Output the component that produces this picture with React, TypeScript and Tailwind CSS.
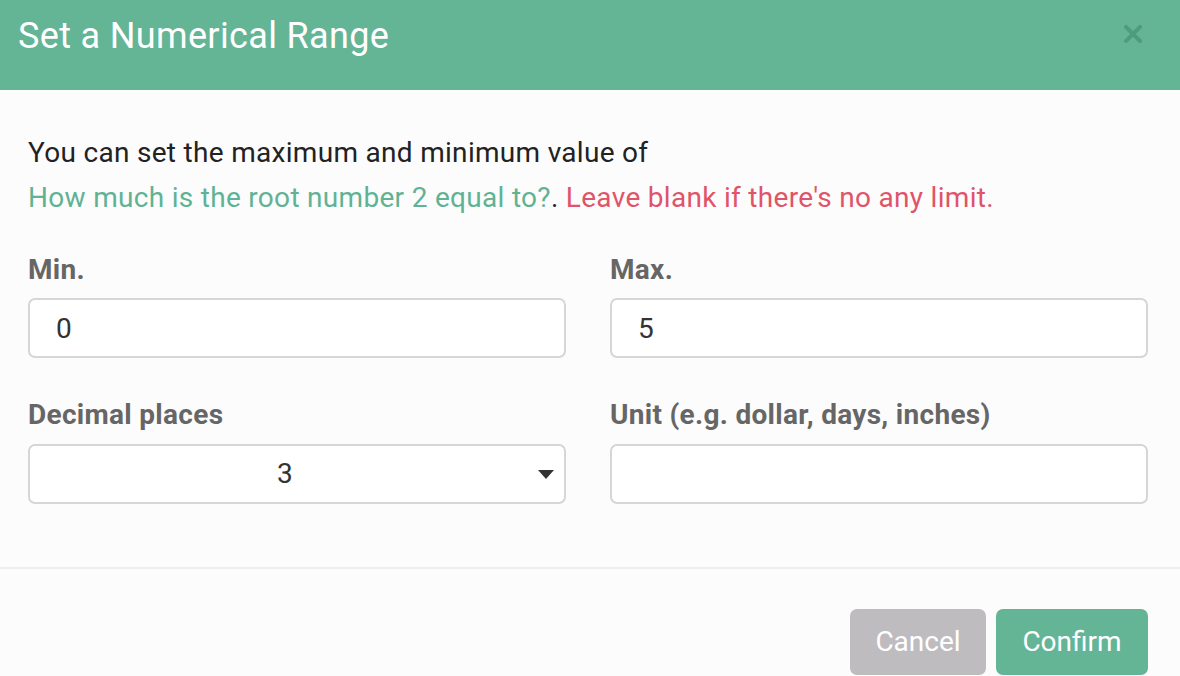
import { useState } from "react";

export default function App() {
  const [min, setMin] = useState("0");
  const [max, setMax] = useState("5");
  const [unit, setUnit] = useState("");
  const [decimals, setDecimals] = useState("3");

  return (
    <div className="w-[1180px] h-[676px] overflow-hidden bg-[#fdfcfd] font-['Roboto',sans-serif] tracking-[0.3px]">
      {/* Header */}
      <div className="h-[90px] bg-[#63b596] pl-[18px] pr-[38px] pt-[19px] flex items-start justify-between">
        <h1 className="text-[36px] leading-[35px] tracking-[0.35px] text-white">Set a Numerical Range</h1>
        <button type="button" className="mt-[6px] text-[#4e9c7d]">
          <svg width="18" height="18" viewBox="0 0 18 18">
            <path d="M2 2L16 16M16 2L2 16" stroke="currentColor" strokeWidth="4" strokeLinecap="square" />
          </svg>
        </button>
      </div>

      {/* Body */}
      <div className="pl-[28px] pr-[32px] pt-[42px]">
        <p className="text-[28px] leading-[42px] text-[#222222]">
          You can set the maximum and minimum value of
        </p>
        <p className="mt-[3px] text-[28px] leading-[42px]">
          <span className="text-[#5fb394]">How much is the root number 2 equal to?</span>
          <span className="text-[#222222]">.</span>{" "}
          <span className="text-[#e0546a]">Leave blank if there's no any limit.</span>
        </p>

        <div className="grid grid-cols-2 gap-x-[44px] mt-[30px]">
          <div>
            <label className="block text-[28px] leading-[42px] font-bold text-[#666666]">Min.</label>
            <input
              value={min}
              onChange={(e) => setMin(e.target.value)}
              className="mt-[7px] w-full h-[60px] px-[26px] rounded-[7px] border-2 border-[#d6d5d7] bg-white text-[28px] text-[#333333] outline-none"
            />
          </div>
          <div>
            <label className="block text-[28px] leading-[42px] font-bold text-[#666666]">Max.</label>
            <input
              value={max}
              onChange={(e) => setMax(e.target.value)}
              className="mt-[7px] w-full h-[60px] px-[26px] rounded-[7px] border-2 border-[#d6d5d7] bg-white text-[28px] text-[#333333] outline-none"
            />
          </div>

          <div className="mt-[36px]">
            <label className="block text-[28px] leading-[42px] font-bold text-[#666666]">Decimal places</label>
            <div className="relative mt-[8px]">
              <select
                value={decimals}
                onChange={(e) => setDecimals(e.target.value)}
                className="appearance-none w-full h-[60px] pr-[24px] rounded-[7px] border-2 border-[#d6d5d7] bg-white text-[28px] text-[#333333] text-center [text-align-last:center] outline-none"
              >
                <option value="0">0</option>
                <option value="1">1</option>
                <option value="2">2</option>
                <option value="3">3</option>
                <option value="4">4</option>
              </select>
              <svg
                className="pointer-events-none absolute right-[12px] top-[26px]"
                width="16"
                height="9"
                viewBox="0 0 16 9"
              >
                <path d="M0 0H16L8 9Z" fill="#333333" />
              </svg>
            </div>
          </div>
          <div className="mt-[36px]">
            <label className="block text-[28px] leading-[42px] font-bold text-[#666666]">
              Unit (e.g. dollar, days, inches)
            </label>
            <input
              value={unit}
              onChange={(e) => setUnit(e.target.value)}
              className="mt-[8px] w-full h-[60px] px-[26px] rounded-[7px] border-2 border-[#d6d5d7] bg-white text-[28px] text-[#333333] outline-none"
            />
          </div>
        </div>
      </div>

      {/* Footer */}
      <div className="mt-[63px] border-t-2 border-[#efedf0] pt-[40px] pr-[32px] flex justify-end gap-[10px]">
        <button
          type="button"
          className="h-[66px] w-[136px] rounded-[7px] bg-[#bebcbf] text-[28px] tracking-normal text-white"
        >
          Cancel
        </button>
        <button
          type="button"
          className="h-[66px] w-[152px] rounded-[7px] bg-[#63b596] text-[28px] tracking-normal text-white"
        >
          Confirm
        </button>
      </div>
    </div>
  );
}
